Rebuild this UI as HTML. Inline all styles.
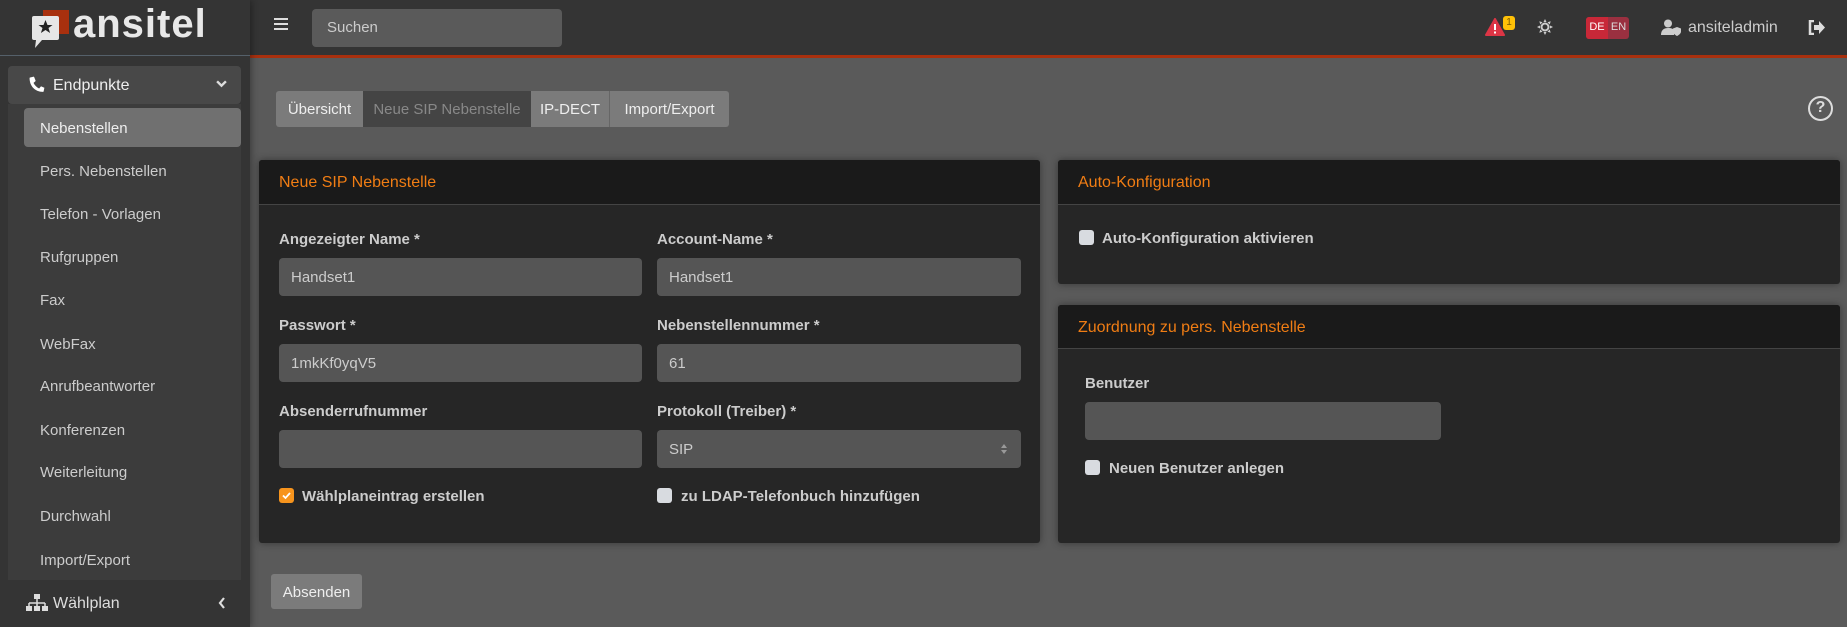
<!DOCTYPE html>
<html><head><meta charset="utf-8"><style>
*{box-sizing:border-box;margin:0;padding:0}
body{width:1847px;height:627px;overflow:hidden;background:#5a5a5a;font-family:"Liberation Sans",sans-serif;font-size:15px;color:#ddd;position:relative}
.a{position:absolute}
.top{left:0;top:0;width:1847px;height:55px;background:#343434}
.line{left:250px;top:55px;width:1597px;height:3px;background:#a8300e}
.side{left:0;top:0;width:250px;height:627px;background:#343434;box-shadow:2px 0 6px rgba(0,0,0,.3)}
.sub{left:8px;top:104px;width:233px;height:476px;background:#3c3c3c}
.mi{left:40px;color:#ccc;font-size:15px}
.inp{background:#555;border-radius:4px;color:#ccc;font-size:15px;padding-left:12px;line-height:38px;height:38px}
.lbl{font-weight:bold;font-size:15px;color:#ccc}
.panel{background:#262626;border-radius:3px;box-shadow:0 0 8px rgba(0,0,0,.4)}
.ph{background:#1a1a1a;border-bottom:1px solid #444;color:#f07d14;font-size:16px;padding-left:20px;border-radius:3px 3px 0 0}
.cb{width:15px;height:15px;border-radius:3px;background:#d8dbe0}
.tab{top:91px;height:36px;line-height:37px;font-size:15px;text-align:center;background:#7b7b7b;color:#eee}
</style></head><body>
<div class="a top"></div>
<div class="a line"></div>
<div class="a side"></div>
<!-- logo -->
<svg class="a" style="left:31px;top:10px" width="40" height="40" viewBox="0 0 40 40"><rect x="12" y="0" width="26" height="24" fill="#a8300e"/><rect x="1" y="6" width="27" height="24" rx="2" fill="#e6e6e6"/><path d="M5 30 L4 38 L11 30Z" fill="#e6e6e6"/><path d="M14.5 10 l2 5 5 0 -4 3 1.6 5 -4.6-3 -4.6 3 1.6-5 -4-3 5 0z" fill="#222"/></svg>
<div class="a" style="left:73px;top:2px;font-size:40px;font-weight:bold;color:#e8e8e8;letter-spacing:1px">ansitel</div>
<div class="a" style="left:0;top:55px;width:250px;height:1px;background:#55606a"></div>
<div class="a" style="left:8px;top:66px;width:233px;height:38px;background:#484848;border-radius:4px"></div>
<svg class="a" style="left:28px;top:75px" width="18" height="18" viewBox="0 0 16 16"><path d="M15 11.5l-3-1.3c-.3-.1-.6 0-.8.2l-1.3 1.6C7.8 11 5.9 9.1 4.9 7l1.6-1.3c.2-.2.3-.5.2-.8L5.5 1.9C5.3 1.6 5 1.4 4.7 1.5L1.9 2.2C1.6 2.2 1.4 2.5 1.4 2.8 1.4 10 6.4 15 13.2 15c.3 0 .6-.2.7-.5l.6-2.8c.1-.3-.1-.6-.5-.7z" fill="#fff"/></svg>
<div class="a" style="left:53px;top:77px;font-size:16px;color:#eee">Endpunkte</div>
<svg class="a" style="left:216px;top:79px" width="11" height="9" viewBox="0 0 10 8"><path d="M1 2l4 4 4-4" stroke="#ddd" stroke-width="2.2" fill="none"/></svg>
<div class="a sub"></div>
<div class="a" style="left:24px;top:108px;width:217px;height:39px;background:#707070;border-radius:4px"></div>
<div class="a mi" style="top:120px;color:#eee">Nebenstellen</div>
<div class="a mi" style="top:163px">Pers. Nebenstellen</div>
<div class="a mi" style="top:206px">Telefon - Vorlagen</div>
<div class="a mi" style="top:249px">Rufgruppen</div>
<div class="a mi" style="top:292px">Fax</div>
<div class="a mi" style="top:336px">WebFax</div>
<div class="a mi" style="top:378px">Anrufbeantworter</div>
<div class="a mi" style="top:422px">Konferenzen</div>
<div class="a mi" style="top:464px">Weiterleitung</div>
<div class="a mi" style="top:508px">Durchwahl</div>
<div class="a mi" style="top:552px">Import/Export</div>
<svg class="a" style="left:26px;top:594px" width="22" height="18" viewBox="0 0 22 18"><rect x="8" y="0" width="6" height="5" fill="#ddd"/><path d="M11 5v4M3 9h16M3 9v4M11 9v4M19 9v4" stroke="#ddd" stroke-width="1.5" fill="none"/><rect x="0" y="12" width="6" height="5" fill="#ddd"/><rect x="8" y="12" width="6" height="5" fill="#ddd"/><rect x="16" y="12" width="6" height="5" fill="#ddd"/></svg>
<div class="a" style="left:53px;top:595px;font-size:16px;color:#ddd">Wählplan</div>
<svg class="a" style="left:218px;top:597px" width="8" height="12" viewBox="0 0 8 12"><path d="M6 1L2 6l4 5" stroke="#ddd" stroke-width="2.2" fill="none"/></svg>
<!-- topbar -->
<div class="a" style="left:274px;top:18px;width:14px;height:2px;background:#ddd;box-shadow:0 5px 0 #ddd,0 10px 0 #ddd"></div>
<div class="a inp" style="left:312px;top:9px;width:250px;height:38px;background:#5a5a5a;color:#ccc;padding-left:15px">Suchen</div>
<svg class="a" style="left:1485px;top:18px" width="20" height="18" viewBox="0 0 20 18"><path d="M10 1L19 17H1z" fill="#dc3545" stroke="#dc3545" stroke-linejoin="round" stroke-width="2"/><rect x="9" y="6" width="2" height="6" fill="#fff"/><rect x="9" y="13.5" width="2" height="2" fill="#fff"/></svg>
<div class="a" style="left:1503px;top:16px;width:12px;height:14px;background:#ffc107;border-radius:3px;color:#7a5a00;font-size:10px;text-align:center;line-height:14px">1</div>
<svg class="a" style="left:1537px;top:19px" width="16" height="16" viewBox="0 0 16 16"><g fill="#ccc"><circle cx="8" cy="8" r="4.5"/><path d="M8 0l1.5 3h-3zM8 16l1.5-3h-3zM0 8l3 1.5v-3zM16 8l-3 1.5v-3zM2.3 2.3l3.2 1-2.2 2.2zM13.7 13.7l-3.2-1 2.2-2.2zM13.7 2.3l-1 3.2-2.2-2.2zM2.3 13.7l1-3.2 2.2 2.2z"/></g><circle cx="8" cy="8" r="2.5" fill="#343434"/></svg>
<div class="a" style="left:1586px;top:17px;width:43px;height:22px;background:#9a3040;border-radius:3px"></div>
<div class="a" style="left:1586px;top:17px;width:22px;height:22px;background:#c82838;border-radius:3px 0 0 3px"></div>
<div class="a" style="left:1586px;top:21px;width:22px;text-align:center;font-size:11px;color:#fff">DE</div>
<div class="a" style="left:1608px;top:21px;width:21px;text-align:center;font-size:11px;color:#ddd">EN</div>
<svg class="a" style="left:1661px;top:19px" width="21" height="17" viewBox="0 0 21 17"><circle cx="7" cy="4.5" r="4" fill="#ccc"/><path d="M0 16c0-5 3-7 7-7s5 1 6 2v5z" fill="#ccc"/><path d="M16 8l4 1.5v3c0 2-2 3.5-4 4.5-2-1-4-2.5-4-4.5v-3z" fill="#ccc"/></svg>
<div class="a" style="left:1688px;top:19px;font-size:16px;color:#ccc">ansiteladmin</div>
<svg class="a" style="left:1808px;top:20px" width="17" height="15" viewBox="0 0 17 15"><path d="M6 1H2v13h4" stroke="#ddd" stroke-width="2.5" fill="none"/><path d="M6 5h5V1l6 6.5-6 6.5v-4H6z" fill="#ddd"/></svg>
<!-- tabs -->
<div class="a tab" style="left:276px;width:87px;border-radius:3px 0 0 3px">Übersicht</div>
<div class="a tab" style="left:363px;width:168px;background:#444;color:#888">Neue SIP Nebenstelle</div>
<div class="a tab" style="left:531px;width:78px">IP-DECT</div>
<div class="a tab" style="left:609px;width:120px;border-radius:0 3px 3px 0;border-left:1px solid #666">Import/Export</div>
<div class="a" style="left:1808px;top:96px;width:25px;height:25px;border:2.5px solid #ddd;border-radius:50%;text-align:center;line-height:20px;font-weight:bold;font-size:16px;color:#ddd">?</div>
<!-- panel 1 -->
<div class="a panel" style="left:259px;top:160px;width:781px;height:383px"></div>
<div class="a ph" style="left:259px;top:160px;width:781px;height:45px;line-height:46px">Neue SIP Nebenstelle</div>
<div class="a lbl" style="left:279px;top:231px">Angezeigter Name *</div>
<div class="a lbl" style="left:657px;top:231px">Account-Name *</div>
<div class="a inp" style="left:279px;top:258px;width:363px;line-height:40px">Handset1</div>
<div class="a inp" style="left:657px;top:258px;width:364px;line-height:40px">Handset1</div>
<div class="a lbl" style="left:279px;top:317px">Passwort *</div>
<div class="a lbl" style="left:657px;top:317px">Nebenstellennummer *</div>
<div class="a inp" style="left:279px;top:344px;width:363px;line-height:40px">1mkKf0yqV5</div>
<div class="a inp" style="left:657px;top:344px;width:364px;line-height:40px">61</div>
<div class="a lbl" style="left:279px;top:403px">Absenderrufnummer</div>
<div class="a lbl" style="left:657px;top:403px">Protokoll (Treiber) *</div>
<div class="a inp" style="left:279px;top:430px;width:363px"></div>
<div class="a inp" style="left:657px;top:430px;width:364px;line-height:40px">SIP</div>
<svg class="a" style="left:1000px;top:443px" width="8" height="12" viewBox="0 0 8 12"><path d="M1 5l3-4 3 4zM1 7l3 4 3-4z" fill="#999"/></svg>
<div class="a cb" style="left:279px;top:488px;background:#f7941d"></div>
<svg class="a" style="left:281px;top:490px" width="11" height="11" viewBox="0 0 11 11"><path d="M2 5.5l2.5 2.5 4.5-5" stroke="#fff" stroke-width="1.8" fill="none"/></svg>
<div class="a lbl" style="left:302px;top:488px">Wählplaneintrag erstellen</div>
<div class="a cb" style="left:657px;top:488px"></div>
<div class="a lbl" style="left:681px;top:488px">zu LDAP-Telefonbuch hinzufügen</div>
<!-- panel 2 -->
<div class="a panel" style="left:1058px;top:160px;width:782px;height:124px"></div>
<div class="a ph" style="left:1058px;top:160px;width:782px;height:45px;line-height:46px">Auto-Konfiguration</div>
<div class="a cb" style="left:1079px;top:230px"></div>
<div class="a lbl" style="left:1102px;top:230px">Auto-Konfiguration aktivieren</div>
<!-- panel 3 -->
<div class="a panel" style="left:1058px;top:305px;width:782px;height:238px"></div>
<div class="a ph" style="left:1058px;top:305px;width:782px;height:44px;line-height:45px">Zuordnung zu pers. Nebenstelle</div>
<div class="a lbl" style="left:1085px;top:375px">Benutzer</div>
<div class="a inp" style="left:1085px;top:402px;width:356px"></div>
<div class="a cb" style="left:1085px;top:460px"></div>
<div class="a lbl" style="left:1109px;top:460px">Neuen Benutzer anlegen</div>
<div class="a" style="left:271px;top:574px;width:91px;height:35px;background:#7b7b7b;border-radius:3px;line-height:37px;text-align:center;color:#eee;font-size:15px">Absenden</div>
</body></html>
